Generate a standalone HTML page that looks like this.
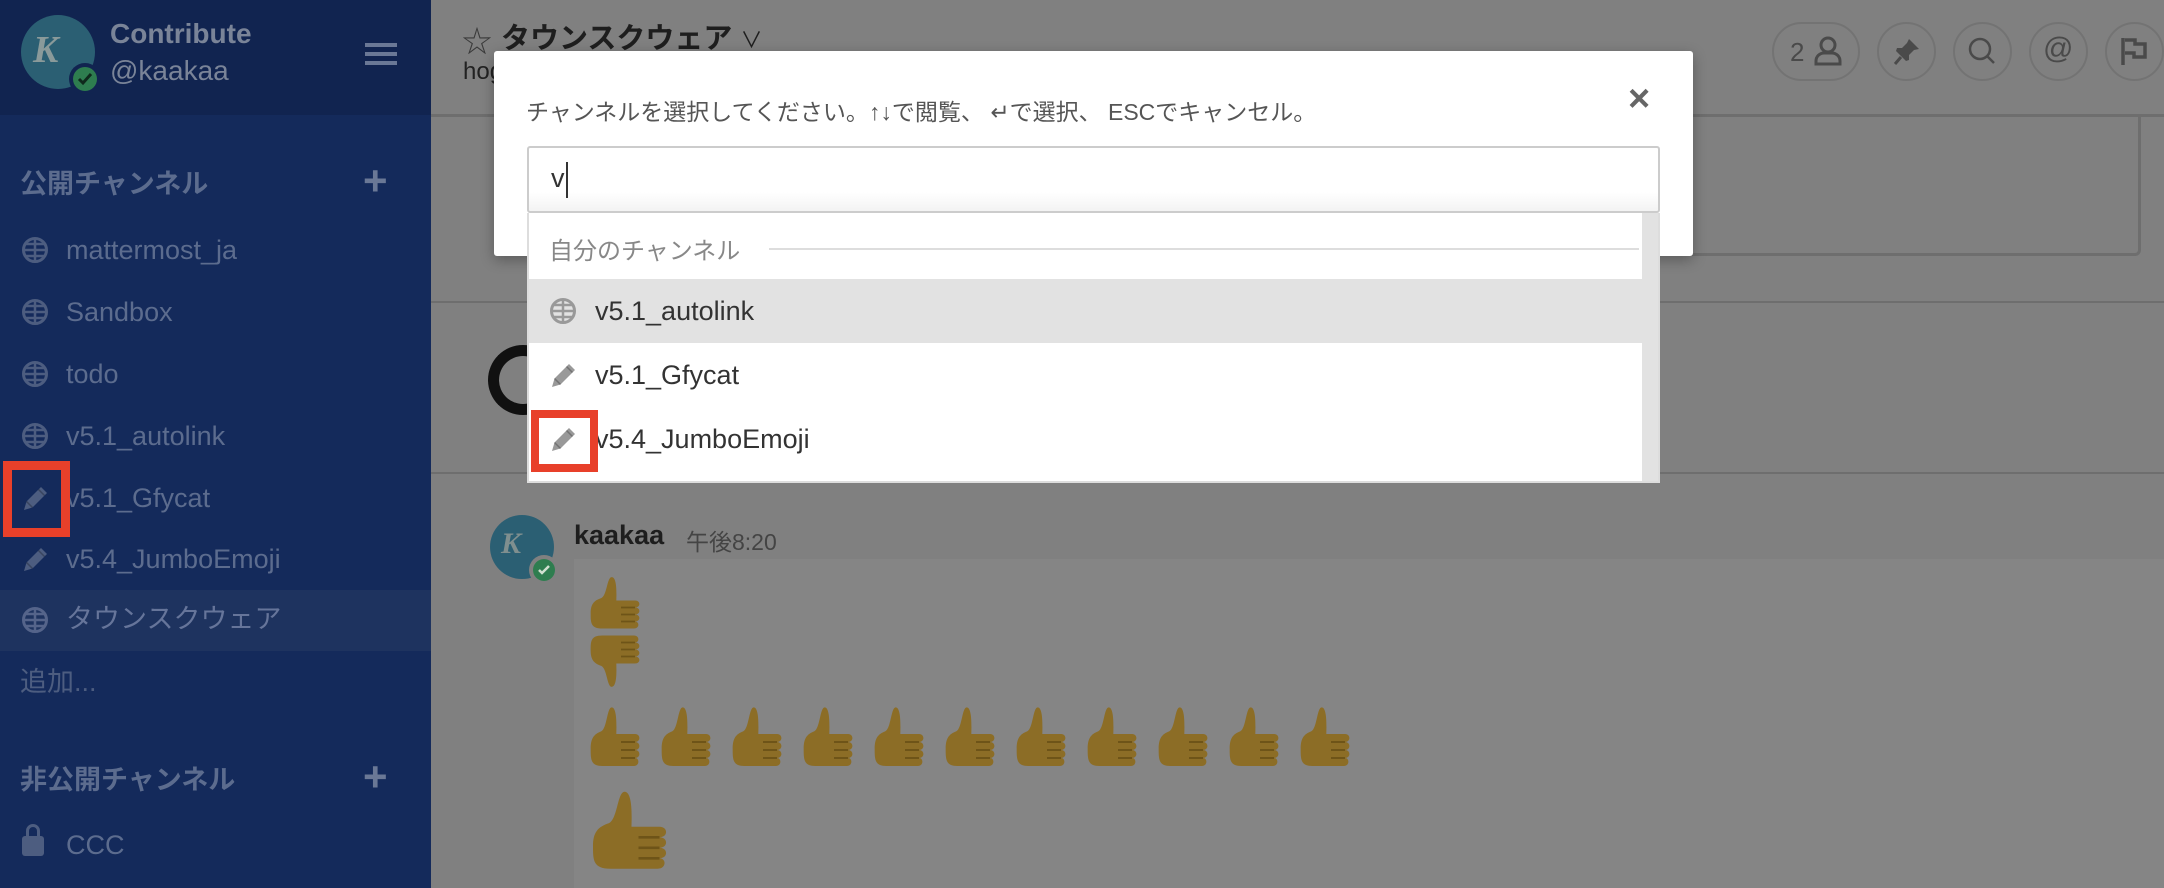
<!DOCTYPE html>
<html><head><meta charset="utf-8"><style>
*{margin:0;padding:0;box-sizing:border-box}
body{width:2164px;height:888px;overflow:hidden;background:#808080;position:relative;font-family:"Liberation Sans","Noto Sans CJK JP",sans-serif}
.abs{position:absolute}
#side{left:0;top:0;width:431px;height:888px;background:#142a5b}
#shead{left:0;top:0;width:431px;height:115px;background:#112450}
.si{position:absolute;left:66px;font-size:27px;color:#5c6c8e;line-height:1;white-space:nowrap}
.ic{position:absolute;left:21px;width:30px;height:30px;overflow:visible}
.sec{position:absolute;left:20px;font-size:27px;font-weight:bold;color:#5c6c8e}
.plus{position:absolute;left:363px;font-size:42px;color:#6a7896;font-weight:bold;line-height:1}
.btn{position:absolute;top:22px;height:59px;border:2px solid #737373;border-radius:30px}
.row{position:absolute;left:0;width:1643px;height:64px}
.row span{position:absolute;left:66px;top:17px;font-size:27px;color:#333}
.emo{position:absolute;width:56px;height:64px}
</style></head><body>
<div id="side" class="abs"></div>
<div id="shead" class="abs"></div>
<div class="abs" style="left:21px;top:15px;width:74px;height:74px;border-radius:50%;background:#2b5f73"></div>
<div class="abs" style="left:33px;top:28px;font-family:'Liberation Serif',serif;font-style:italic;font-weight:bold;font-size:38px;color:#8a9a9a">K</div>
<div class="abs" style="left:69px;top:63px;width:32px;height:32px;border-radius:50%;background:#112450"></div>
<div class="abs" style="left:73px;top:67px;width:24px;height:24px;border-radius:50%;background:#2e7d4f"></div>
<svg class="abs" style="left:77px;top:72px" width="16" height="14"><path d="M2 7l4 4 8-9" stroke="#0f2a1c" stroke-width="3" fill="none"/></svg>
<div class="abs" style="left:110px;top:18px;font-size:28px;font-weight:bold;color:#7a8498">Contribute</div>
<div class="abs" style="left:110px;top:55px;font-size:28px;color:#7a8498">@kaakaa</div>
<div class="abs" style="left:365px;top:43px;width:32px;height:4px;background:#6a7896;box-shadow:0 9px 0 #6a7896,0 18px 0 #6a7896"></div>

<div class="sec" style="top:162px">公開チャンネル</div><div class="plus" style="top:160px;left:363px">+</div>
<svg width="0" height="0" style="position:absolute"><defs>
<g id="glb"><circle cx="14" cy="14" r="11.5" fill="none" stroke="currentColor" stroke-width="3"/><path d="M2.5 14h23M14 2.5v23M5 8h18M5 20h18" stroke="currentColor" stroke-width="2.5"/></g>
<g id="pen"><path d="M3 28l2.5-8.5L20 5l6 6L11.5 25.5z" fill="currentColor"/><path d="M5.5 19.5l6 6M17.5 7.5l6 6" stroke="#000" stroke-opacity=".25" stroke-width="1.5"/></g>
</defs></svg>
<svg class="ic" style="top:236px;color:#4d5d80"><use href="#glb"/></svg><div class="si" style="top:237px">mattermost_ja</div>
<svg class="ic" style="top:298px;color:#4d5d80"><use href="#glb"/></svg><div class="si" style="top:299px">Sandbox</div>
<svg class="ic" style="top:360px;color:#4d5d80"><use href="#glb"/></svg><div class="si" style="top:361px">todo</div>
<svg class="ic" style="top:422px;color:#4d5d80"><use href="#glb"/></svg><div class="si" style="top:423px">v5.1_autolink</div>
<svg class="ic" style="top:482px;color:#4d5d80"><use href="#pen"/></svg>
<div class="si" style="top:485px">v5.1_Gfycat</div>
<svg class="ic" style="top:543px;color:#4d5d80"><use href="#pen"/></svg><div class="si" style="top:546px">v5.4_JumboEmoji</div>
<div class="abs" style="left:0;top:590px;width:431px;height:61px;background:#1e335f"></div>
<svg class="ic" style="top:606px;color:#55648a"><use href="#glb"/></svg><div class="si" style="top:606px;color:#66759a">タウンスクウェア</div>
<div class="si" style="left:20px;top:669px;color:#4d5d80">追加...</div>
<div class="sec" style="top:758px">非公開チャンネル</div><div class="plus" style="top:756px">+</div>
<div class="abs" style="left:22px;top:836px;width:22px;height:20px;background:#4d5d80;border-radius:3px"></div>
<div class="abs" style="left:26px;top:824px;width:14px;height:16px;border:3px solid #4d5d80;border-radius:7px 7px 0 0"></div>
<div class="si" style="top:832px">CCC</div>
<div class="abs" style="left:3px;top:461px;width:67px;height:76px;border:9px solid #e8402a"></div>

<div class="abs" style="left:431px;top:114px;width:1733px;height:3px;background:#6e6e6e"></div>
<div class="abs" style="left:462px;top:17px;font-size:30px;color:#3a3a3a">☆</div>
<div class="abs" style="left:501px;top:15px;font-size:29px;font-weight:bold;color:#1e1e1e">タウンスクウェア <span style="font-weight:normal;font-size:22px">∨</span></div>
<div class="abs" style="left:463px;top:58px;font-size:24px;color:#222">hog</div>
<div class="btn" style="left:1772px;width:88px"></div>
<div class="abs" style="left:1790px;top:37px;font-size:26px;color:#4a4a4a">2</div>
<svg class="abs" style="left:1813px;top:36px" width="30" height="30"><circle cx="15" cy="9" r="7" fill="none" stroke="#4a4a4a" stroke-width="3"/><path d="M3 28v-3a8 8 0 0 1 8-8h8a8 8 0 0 1 8 8v3z" fill="none" stroke="#4a4a4a" stroke-width="3"/></svg>
<div class="btn" style="left:1877px;width:59px"></div>
<svg class="abs" style="left:1892px;top:36px" width="30" height="30"><path d="M17 3l10 10-5 1-5 5 0 5-3 1-10-10 1-3 5 0 5-5z" fill="#4a4a4a"/><path d="M9 21l-6 7" stroke="#4a4a4a" stroke-width="3"/></svg>
<div class="btn" style="left:1953px;width:59px"></div>
<svg class="abs" style="left:1967px;top:36px" width="30" height="30"><circle cx="13" cy="13" r="10" fill="none" stroke="#4a4a4a" stroke-width="2.5"/><path d="M20 20l7 7" stroke="#4a4a4a" stroke-width="2.5"/></svg>
<div class="btn" style="left:2029px;width:59px"></div>
<div class="abs" style="left:2043px;top:32px;font-size:30px;color:#4a4a4a">@</div>
<div class="btn" style="left:2105px;width:59px"></div>
<svg class="abs" style="left:2120px;top:36px" width="30" height="30"><path d="M3 2v27" stroke="#4a4a4a" stroke-width="3.5"/><path d="M5 4h10v4h10v13H14v-4H5" fill="none" stroke="#4a4a4a" stroke-width="3.5"/></svg>

<div class="abs" style="left:1600px;top:114px;width:541px;height:142px;border-right:3px solid #6e6e6e;border-bottom:3px solid #6e6e6e;border-radius:0 0 6px 0"></div>
<div class="abs" style="left:431px;top:301px;width:1733px;height:2px;background:#6e6e6e"></div>
<div class="abs" style="left:431px;top:472px;width:1733px;height:2px;background:#6e6e6e"></div>
<div class="abs" style="left:488px;top:345px;width:70px;height:70px;border-radius:50%;border:11px solid #111;border-right-color:transparent"></div>

<div class="abs" style="left:490px;top:515px;width:64px;height:64px;border-radius:50%;background:#2b5f73"></div>
<div class="abs" style="left:501px;top:527px;font-family:'Liberation Serif',serif;font-style:italic;font-weight:bold;font-size:30px;color:#7f8f8f">K</div>
<div class="abs" style="left:529px;top:555px;width:30px;height:30px;border-radius:50%;background:#808080"></div>
<div class="abs" style="left:533px;top:559px;width:22px;height:22px;border-radius:50%;background:#2e7d4f"></div>
<svg class="abs" style="left:537px;top:563px" width="14" height="14"><path d="M2 7l3 3 7-7" stroke="#d0e0d0" stroke-width="2.5" fill="none"/></svg>
<div class="abs" style="left:574px;top:520px;font-size:27px;font-weight:bold;color:#1e1e1e">kaakaa</div>
<div class="abs" style="left:686px;top:523px;font-size:23px;color:#444">午後8:20</div>
<div class="abs" style="left:574px;top:559px;width:1590px;height:329px;background:#858585"></div>
<svg width="0" height="0" style="position:absolute"><defs><g id="th"><path d="M22 1c5 0 4 16 4 20h16c5 0 5 6 0 6 5 0 5 6 0 6 5 0 5 6 0 6 4 0 4 6-1 6H14C4 45 4 40 4 32s3-11 9-13c5-2 5-18 9-18z" fill="#8c6d26"/><path d="M30 27h12M30 33h12M30 39h12" stroke="#6e5418" stroke-width="1.5"/></g></defs></svg>
<svg class="emo" style="left:586px;top:576px;height:56px" viewBox="0 0 48 48" preserveAspectRatio="none"><use href="#th"/></svg>
<svg class="emo" style="left:586px;top:632px;height:56px" viewBox="0 0 48 48" preserveAspectRatio="none"><g transform="matrix(1,0,0,-1,0,48)"><use href="#th"/></g></svg>
<div class="abs" style="left:586px;top:706px;width:800px;height:64px">
<svg class="emo" style="left:0" viewBox="0 0 48 48" preserveAspectRatio="none"><use href="#th"/></svg>
<svg class="emo" style="left:71px" viewBox="0 0 48 48" preserveAspectRatio="none"><use href="#th"/></svg>
<svg class="emo" style="left:142px" viewBox="0 0 48 48" preserveAspectRatio="none"><use href="#th"/></svg>
<svg class="emo" style="left:213px" viewBox="0 0 48 48" preserveAspectRatio="none"><use href="#th"/></svg>
<svg class="emo" style="left:284px" viewBox="0 0 48 48" preserveAspectRatio="none"><use href="#th"/></svg>
<svg class="emo" style="left:355px" viewBox="0 0 48 48" preserveAspectRatio="none"><use href="#th"/></svg>
<svg class="emo" style="left:426px" viewBox="0 0 48 48" preserveAspectRatio="none"><use href="#th"/></svg>
<svg class="emo" style="left:497px" viewBox="0 0 48 48" preserveAspectRatio="none"><use href="#th"/></svg>
<svg class="emo" style="left:568px" viewBox="0 0 48 48" preserveAspectRatio="none"><use href="#th"/></svg>
<svg class="emo" style="left:639px" viewBox="0 0 48 48" preserveAspectRatio="none"><use href="#th"/></svg>
<svg class="emo" style="left:710px" viewBox="0 0 48 48" preserveAspectRatio="none"><use href="#th"/></svg>
</div>
<svg class="abs" style="left:586px;top:790px" width="84" height="84" viewBox="0 0 48 48"><use href="#th"/></svg>

<div class="abs" style="left:494px;top:51px;width:1199px;height:205px;background:#fff;border-radius:3px;box-shadow:0 4px 14px rgba(0,0,0,.3)"></div>
<div class="abs" style="left:526px;top:93px;font-size:23px;color:#555;white-space:nowrap">チャンネルを選択してください。↑↓で閲覧、 ↵で選択、 ESCでキャンセル。</div>
<div class="abs" style="left:1628px;top:78px;font-size:38px;color:#666;font-weight:bold">×</div>
<div class="abs" style="left:527px;top:146px;width:1133px;height:67px;border:2px solid #ccc;border-radius:3px;background:linear-gradient(#fff 70%,#f3f3f3)"></div>
<div class="abs" style="left:551px;top:163px;font-size:27px;color:#333">v</div>
<div class="abs" style="left:566px;top:162px;width:2px;height:36px;background:#333"></div>
<div class="abs" style="left:527px;top:213px;width:1133px;height:270px;background:#fff;border:2px solid #ddd;border-top:0;overflow:hidden">
<div class="abs" style="right:0;top:0;width:16px;height:270px;background:#e2e2e2"></div>
<div class="abs" style="left:20px;top:18px;font-size:24px;color:#888">自分のチャンネル</div>
<div class="abs" style="left:240px;top:35px;width:870px;height:2px;background:#ddd"></div>
<div class="row" style="top:66px;width:1116px;background:#e2e2e2"><svg class="ic" style="left:20px;top:18px;color:#999"><use href="#glb"/></svg><span>v5.1_autolink</span></div>
<div class="row" style="top:130px;width:1116px"><svg class="ic" style="left:20px;top:16px;color:#999"><use href="#pen"/></svg><span>v5.1_Gfycat</span></div>
<div class="row" style="top:194px;width:1116px"><svg class="ic" style="left:20px;top:16px;color:#999"><use href="#pen"/></svg><span>v5.4_JumboEmoji</span></div>
</div>
<div class="abs" style="left:531px;top:410px;width:67px;height:62px;border:8px solid #e8402a"></div>
</body></html>
